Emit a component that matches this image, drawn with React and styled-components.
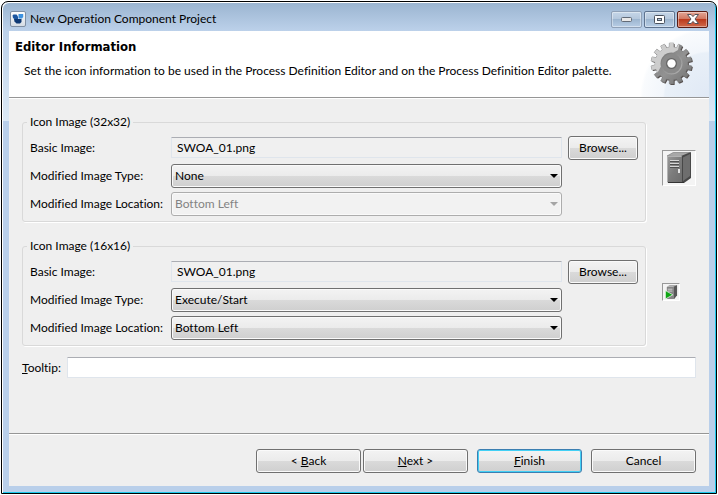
import React from "react";
import styled, { createGlobalStyle, css } from "styled-components";

const GlobalStyle = createGlobalStyle`
  *, *::before, *::after { box-sizing: border-box; }
  body { margin: 0; background: #fff; font-variant-ligatures: none; }
  body, button, input, select {
    font-family: Lato, "Open Sans", sans-serif;
    font-size: 12px;
    line-height: 16px;
    color: #000;
  }
  button, input, select { font-variant-ligatures: none; }
`;

const Window = styled.div`
  display: flex;
  flex-direction: column;
  min-height: calc(100vh - 2px);
  margin: 1px;
  padding: 0 6px 6px;
  border: 1px solid #000;
  border-radius: 7px 7px 0 0;
  background: linear-gradient(#9ab4d0 0, #bcd1ea 29px, #dce9f5 119px, #b9cfea 119px);
  box-shadow: inset 1px 1px #fff, inset -1px -1px #1cc9ec;
`;

const TitleBar = styled.header`
  display: flex;
  align-items: center;
  gap: 4px;
  height: 29px;
  padding: 5px 2px 0;
`;

const WindowTitle = styled.h1`
  flex: 1;
  margin: 0;
  font-size: 12px;
  font-weight: 400;
`;

const WindowControls = styled.div`
  display: flex;
  gap: 2px;
`;

const WindowButton = styled.button`
  display: grid;
  place-items: center;
  width: 31px;
  height: 17px;
  padding: 0;
  border: 1px solid ${(p) => (p.$close ? "#5a1c14" : p.$muted ? "#8fa0b6" : "#5e738f")};
  border-radius: 2px;
  background: ${(p) =>
    p.$close
      ? "linear-gradient(#e3a595 0, #d27862 45%, #bb3a1d 50%, #cf6a4c 100%)"
      : "linear-gradient(#c5d6e8 0, #b5c8dd 45%, #9db6d0 50%, #b7cde5 100%)"};
  box-shadow: inset 0 0 0 1px rgba(255, 255, 255, 0.4);
`;

const Content = styled.main`
  flex: 1;
  display: flex;
  flex-direction: column;
  margin: 0 1px 1px;
  background: #efefef;
`;

const Banner = styled.section`
  display: flex;
  align-items: center;
  justify-content: space-between;
  height: 66px;
  padding: 0 15px 0 6px;
  background: radial-gradient(circle at 100% 100%, #e0e9f5 0, #e9f0f8 44px, #f2f6fb 46px, #f9fbfd 66px, #fff 69px);
`;

const BannerText = styled.div`
  align-self: flex-start;
  padding-top: 8px;
`;

const BannerTitle = styled.h2`
  margin: 0;
  font: bold 13px/16px "DejaVu Sans Condensed", "DejaVu Sans", sans-serif;
`;

const BannerMessage = styled.p`
  margin: 8px 0 0 9px;
`;

const Rule = styled.hr`
  width: 100%;
  height: 2px;
  margin: 0;
  border: 0;
  border-top: 1px solid #969696;
  border-bottom: 1px solid #fff;
`;

const Form = styled.form`
  flex: 1;
  display: flex;
  flex-direction: column;
`;

const Fields = styled.div`
  flex: 1;
  padding: 15px 13px;
`;

const GroupRow = styled.div`
  display: grid;
  grid-template-columns: 1fr 34px;
  column-gap: 16px;
  align-items: center;
  margin-bottom: ${(p) => (p.$last ? "11px" : "16px")};
`;

const Group = styled.fieldset`
  min-width: 0;
  margin: 0;
  padding: 5px 7px;
  border: 1px solid #d9d9d9;
  border-radius: 3px;
  box-shadow: 1px 1px #fff;
`;

const Legend = styled.legend`
  height: 16px;
  margin-left: -3px;
  padding: 0 3px;
  background: #efefef;
`;

const GroupGrid = styled.div`
  display: grid;
  grid-template-columns: 135px 1fr 70px;
  grid-template-rows: 25px 24px 24px;
  gap: 4px 6px;
  align-items: center;
`;

const Label = styled.label`
  grid-column: 1;
  white-space: nowrap;
`;

const TextField = styled.input`
  flex: 1;
  width: 100%;
  min-width: 0;
  height: 21px;
  padding: 0 5px;
  border: 1px solid #dfe5ec;
  border-top-color: #abadb3;
  border-radius: 1px;
  background: ${(p) => (p.readOnly ? "#f0f0f0" : "#fff")};
`;

const buttonFace = css`
  border: 1px solid #707070;
  border-radius: 3px;
  background: linear-gradient(#f3f3f3 0, #ebebeb 50%, #dadada 50%, #cfcfcf 100%);
  box-shadow: inset 0 0 0 1px #fafafa;
`;

const SelectBox = styled.div`
  display: grid;
  align-items: center;

  > * { grid-area: 1 / 1; }
  > svg { justify-self: end; margin-right: 4px; pointer-events: none; }
`;

const Select = styled.select`
  ${buttonFace}
  appearance: none;
  width: 100%;
  height: 24px;
  padding: 0 20px 0 3px;

  &:disabled {
    border-color: #adadad;
    background: #f2f2f2;
    color: #838383;
    opacity: 1;
  }
`;

const PushButton = styled.button`
  ${buttonFace}
  width: ${(p) => (p.$wide ? "105px" : "100%")};
  height: 24px;
  padding: 0;
  ${(p) =>
    p.$primary &&
    css`
      border-color: #3c7fb1;
      box-shadow: inset 0 0 0 1px #42d0f5;
    `}
`;

const Preview = styled.div`
  justify-self: start;
  display: grid;
  padding: 1px;
  border: 1px solid #fff;
  border-top-color: #999;
  border-left-color: #999;
  background: #f4f4f4;
`;

const TooltipRow = styled.div`
  display: flex;
  align-items: center;
  gap: 6px;
`;

const Footer = styled.footer`
  display: flex;
  justify-content: flex-end;
  gap: 9px;
  padding: 14px 13px 13px;
`;

const ButtonPair = styled.div`
  display: flex;
  gap: 2px;
`;

function AppIcon() {
  return (
    <svg width="16" height="16" viewBox="0 0 16 16" aria-hidden="true">
      <defs>
        <linearGradient id="appTile" x1="0" y1="0" x2="0" y2="1">
          <stop offset="0" stopColor="#fff" />
          <stop offset="1" stopColor="#d3dbe3" />
        </linearGradient>
      </defs>
      <rect x=".5" y=".5" width="15" height="15" rx="1.5" fill="url(#appTile)" stroke="#7f8fa3" />
      <path d="M2.5 4.5 3.5 3.5h3L8 5.5v3H5L3 7Z" fill="#1c56a0" />
      <path d="M8.500 3h4.700v3L12 7.500H8.500Z" fill="#3d91df" />
      <path d="M4 8h7.500v3L10 12.500H6.500L4.500 10.500Z" fill="#0e3974" />
    </svg>
  );
}

const TEETH = 14;
const gearPath = (() => {
  const points = [];
  const profile = [
    [-0.3, 16.5],
    [-0.23, 20.5],
    [0.23, 20.5],
    [0.3, 16.5],
  ];
  for (let i = 0; i < TEETH; i += 1) {
    profile.forEach(([offset, radius]) => {
      const angle = ((i + offset) / TEETH) * Math.PI * 2 - Math.PI / 2;
      points.push(`${(21.5 + radius * Math.cos(angle)).toFixed(2)} ${(21.5 + radius * Math.sin(angle)).toFixed(2)}`);
    });
  }
  return `M${points.join("L")}Z`;
})();

function GearIcon() {
  return (
    <svg width="44" height="44" viewBox="0 0 44 44" aria-hidden="true">
      <defs>
        <linearGradient id="gearDark" x1="0" y1="0" x2="1" y2="1">
          <stop offset="0" stopColor="#777" />
          <stop offset=".55" stopColor="#929292" />
          <stop offset="1" stopColor="#707070" />
        </linearGradient>
        <linearGradient id="gearRing" x1="0" y1="0" x2="1" y2="1">
          <stop offset="0" stopColor="#737373" />
          <stop offset="1" stopColor="#b4b4b4" />
        </linearGradient>
        <clipPath id="gearShape">
          <path d={gearPath} />
        </clipPath>
      </defs>
      <path d={gearPath} transform="translate(1 1)" fill="#514a48" />
      <path d={gearPath} fill="url(#gearDark)" stroke="#777" strokeWidth=".6" />
      <path d="M0 0h30L28 8C18 13 13 20 8 30L0 33Z" fill="#cdcdcd" clipPath="url(#gearShape)" />
      <circle cx="21.5" cy="21.5" r="11" fill="url(#gearRing)" />
      <circle cx="21.5" cy="21.5" r="9.8" fill="#8a8a8a" />
      <circle cx="21.5" cy="21.5" r="5.5" fill="#666" />
      <circle cx="21.5" cy="21.5" r="4.2" fill="#fff" />
    </svg>
  );
}

function ServerIcon() {
  return (
    <svg width="30" height="32" viewBox="0 0 30 32" role="img" aria-label="Server icon, 32 by 32">
      <defs>
        <linearGradient id="serverFront" x1="0" y1="0" x2="1" y2="1">
          <stop offset="0" stopColor="#9a9a9a" />
          <stop offset=".5" stopColor="#7c7c7c" />
          <stop offset="1" stopColor="#6c6c6c" />
        </linearGradient>
      </defs>
      <path d="M3 4 10 0h16l-8 5Z" fill="#a8a8a8" stroke="#777" strokeWidth=".6" />
      <path d="M17 4 27 0v26l-7 5h-3Z" fill="#484848" />
      <path d="m19 5.500 7-3.500v22l-7 5Z" fill="#6e6e6e" />
      <path d="M3 4h15v27H4l-1-2Z" fill="url(#serverFront)" />
      <path d="M3.500 4.500h14M3.500 4.500v25" stroke="#b2b2b2" fill="none" />
      <path d="M4 30.500h16" stroke="#333" />
      <path d="M6 8.500h9M6 11.500h9M6 14.500h9" stroke="#d6d6d6" />
      <path d="M6 9.500h9M6 12.500h9M6 15.500h9" stroke="#505050" />
      <path d="M14 17h2v4h-2Z" fill="#e2e2e2" />
    </svg>
  );
}

function SmallServerIcon() {
  return (
    <svg width="14" height="14" viewBox="0 0 15 15" role="img" aria-label="Server start icon, 16 by 16">
      <path d="M3 2 6 0h8l-4 2Z" fill="#aaa" />
      <path d="M10 2 14 0v11l-3 4h-1Z" fill="#575757" />
      <path d="M3 2h7v13H3Z" fill="#858585" />
      <path d="M4 4.500h5M4 6.500h5" stroke="#d4d4d4" />
      <path d="M1.500 6v9L9.500 10.500Z" fill="#0fa514" stroke="#fff" strokeWidth=".7" />
    </svg>
  );
}

function Arrow({ disabled }) {
  return (
    <svg width="8" height="4" viewBox="0 0 8 4" aria-hidden="true">
      <path d="M0 0h8L4 4Z" fill={disabled ? "#a5a5a5" : "#000"} />
    </svg>
  );
}

function SelectField({ id, label, value, options, disabled }) {
  return (
    <>
      <Label htmlFor={id}>{label}</Label>
      <SelectBox>
        <Select id={id} defaultValue={value} disabled={disabled}>
          {options.map((option) => (
            <option key={option}>{option}</option>
          ))}
        </Select>
        <Arrow disabled={disabled} />
      </SelectBox>
    </>
  );
}

function IconGroup({ id, title, type, locationDisabled, last, children }) {
  return (
    <GroupRow $last={last}>
      <Group>
        <Legend>{title}</Legend>
        <GroupGrid>
          <Label htmlFor={`${id}-basic`}>Basic Image:</Label>
          <TextField id={`${id}-basic`} defaultValue="SWOA_01.png" readOnly />
          <PushButton type="button">Browse...</PushButton>
          <SelectField id={`${id}-type`} label="Modified Image Type:" value={type} options={["None", "Execute/Start"]} />
          <SelectField
            id={`${id}-location`}
            label="Modified Image Location:"
            value="Bottom Left"
            options={["Bottom Left"]}
            disabled={locationDisabled}
          />
        </GroupGrid>
      </Group>
      <Preview>{children}</Preview>
    </GroupRow>
  );
}

export default function App() {
  return (
    <>
      <GlobalStyle />
      <Window>
        <TitleBar>
          <AppIcon />
          <WindowTitle>New Operation Component Project</WindowTitle>
          <WindowControls>
            <WindowButton type="button" aria-label="Minimize" $muted>
              <svg width="12" height="6" viewBox="0 0 12 6" aria-hidden="true">
                <rect x=".5" y="1.5" width="10" height="4" rx="1" fill="#e9e9e9" stroke="#626b77" />
              </svg>
            </WindowButton>
            <WindowButton type="button" aria-label="Maximize">
              <svg width="11" height="9" viewBox="0 0 11 9" aria-hidden="true">
                <rect x=".5" y=".5" width="10" height="8" rx="1" fill="#fff" stroke="#4a525e" />
                <rect x="3.5" y="3.5" width="4" height="2" fill="#b5c8dd" stroke="#4a525e" />
              </svg>
            </WindowButton>
            <WindowButton type="button" aria-label="Close" $close>
              <svg width="12" height="10" viewBox="0 0 12 10" aria-hidden="true">
                <path
                  d="M.5 .5h3.6L6 2.6 7.9.5h3.6L8 5l3.5 4.5H7.9L6 7.4 4.1 9.5H.5L4 5Z"
                  fill="#fff"
                  stroke="#54525a"
                />
              </svg>
            </WindowButton>
          </WindowControls>
        </TitleBar>
        <Content>
          <Banner>
            <BannerText>
              <BannerTitle>Editor Information</BannerTitle>
              <BannerMessage>
                Set the icon information to be used in the Process Definition Editor and on the Process Definition
                Editor palette.
              </BannerMessage>
            </BannerText>
            <GearIcon />
          </Banner>
          <Rule />
          <Form onSubmit={(event) => event.preventDefault()}>
            <Fields>
              <IconGroup id="large" title="Icon Image (32x32)" type="None" locationDisabled>
                <ServerIcon />
              </IconGroup>
              <IconGroup id="small" title="Icon Image (16x16)" type="Execute/Start" last>
                <SmallServerIcon />
              </IconGroup>
              <TooltipRow>
                <Label htmlFor="tooltip">
                  <u>T</u>ooltip:
                </Label>
                <TextField id="tooltip" type="text" accessKey="t" />
              </TooltipRow>
            </Fields>
            <Rule />
            <Footer>
              <ButtonPair>
                <PushButton type="button" $wide>
                  &lt; <u>B</u>ack
                </PushButton>
                <PushButton type="button" $wide>
                  <u>N</u>ext &gt;
                </PushButton>
              </ButtonPair>
              <PushButton type="submit" $wide $primary>
                <u>F</u>inish
              </PushButton>
              <PushButton type="button" $wide>
                Cancel
              </PushButton>
            </Footer>
          </Form>
        </Content>
      </Window>
    </>
  );
}
